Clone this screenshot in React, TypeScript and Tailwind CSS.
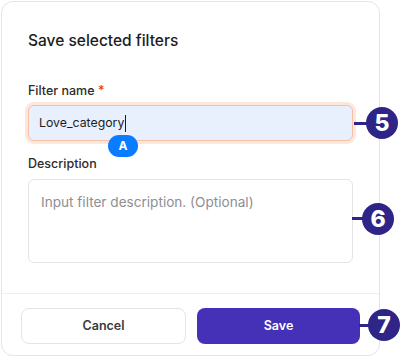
const callouts = [
  { n: 5, lineLeft: 354, lineTop: 121, lineWidth: 14, left: 366, top: 106 },
  { n: 6, lineLeft: 352, lineTop: 216, lineWidth: 13, left: 362, top: 202 },
  { n: 7, lineLeft: 359, lineTop: 323, lineWidth: 12, left: 368, top: 308 },
];

const App = () => {
  return (
    <div className="relative w-[400px] h-[357px] bg-white font-['Inter',sans-serif] text-[#1c1c1e]">
      <div className="ml-px mt-px w-[379px] h-[355px] flex flex-col border border-[#e4e4e7] rounded-xl bg-white">
        <div className="px-[26px] pt-[27px]">
          <h2 className="text-[15.5px] leading-[24px] font-medium">Save selected filters</h2>

          <label className="block mt-[29px] text-[12.5px] leading-[18px] font-medium text-[#2c2c2e]">
            Filter name <span className="text-[#ef2d2d]">*</span>
          </label>
          <div className="relative mt-[5px]">
            <div className="h-[36px] flex items-center pl-[10px] rounded-md border border-[#f7bfa3] bg-[#e8f0fe] ring-[3px] ring-[#fde6db] text-[12.3px] text-[#1c1c1e]">
              Love_category
              <span className="ml-px w-px h-[17px] bg-[#1c1c1e]"></span>
            </div>
            <span className="absolute left-[80px] top-[30px] w-[30px] h-[22px] flex items-center justify-center rounded-full bg-[#0a7cff] text-white text-[12px] font-bold">
              A
            </span>
          </div>

          <label className="block mt-[14px] text-[12.5px] leading-[18px] font-medium text-[#2c2c2e]">
            Description
          </label>
          <div className="mt-[6px] h-[84px] rounded-md border border-[#e4e4e7] px-[12px] pt-[12px] text-[13.6px] leading-[20px] text-[#8e8e93]">
            Input filter description. (Optional)
          </div>
        </div>

        <div className="mt-auto border-t border-[#f0f0f2] px-[19px] pt-[14px] pb-[11px] flex gap-[11px]">
          <button className="flex-1 h-[36px] rounded-lg border border-[#e4e4e7] bg-white text-[12.5px] font-semibold text-[#3a3a3c]">
            Cancel
          </button>
          <button className="flex-1 h-[36px] rounded-lg bg-[#4531b7] text-[12.5px] font-semibold text-white">
            Save
          </button>
        </div>
      </div>

      {callouts.map((c) => (
        <div key={c.n}>
          <div
            className="absolute h-[3px] bg-[#2e2587]"
            style={{ left: c.lineLeft, top: c.lineTop, width: c.lineWidth }}
          ></div>
          <div
            className="absolute w-[32px] h-[32px] rounded-full bg-[#2e2587] flex items-center justify-center text-white text-[23px] font-extrabold leading-none"
            style={{ left: c.left, top: c.top }}
          >
            {c.n}
          </div>
        </div>
      ))}
    </div>
  );
};

export default App;
